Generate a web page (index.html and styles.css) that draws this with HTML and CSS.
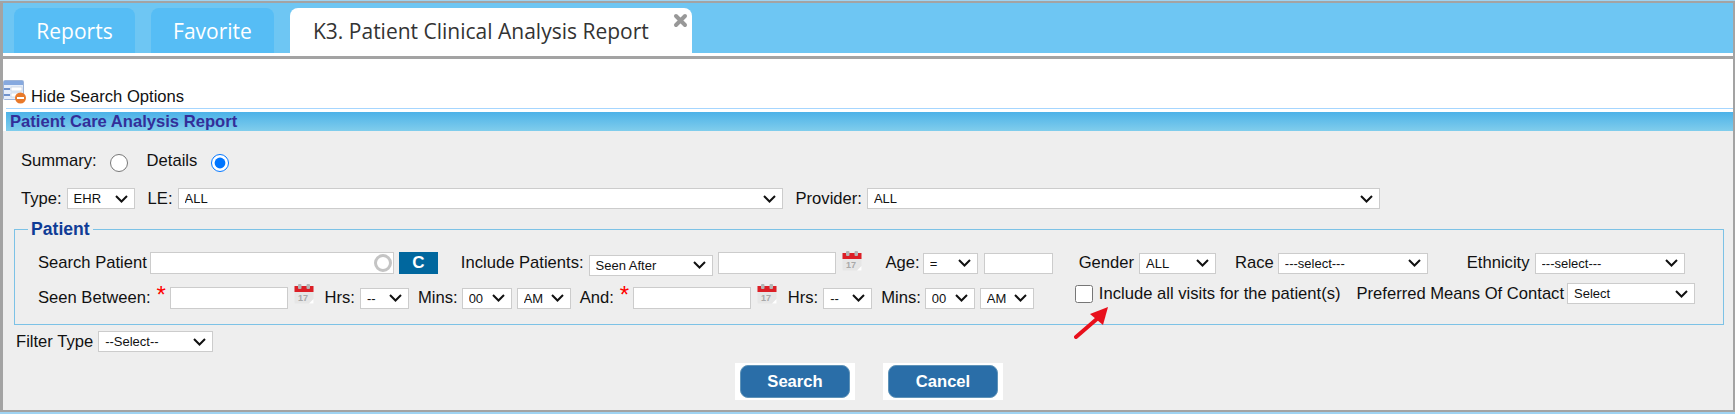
FILE: index.html
```html
<!DOCTYPE html>
<html lang="en">
<head>
<meta charset="utf-8">
<title>Patient Care Analysis Report</title>
<link rel="stylesheet" href="styles.css">
</head>
<body>
<div class="page">
  <nav class="tabbar">
    <a class="tab tab-reports">Reports</a>
    <a class="tab tab-favorite">Favorite</a>
    <a class="tab tab-active">K3. Patient Clinical Analysis Report
      <svg class="tab-close" viewBox="0 0 15 15" aria-hidden="true"><path d="M3 3 L12 12 M12 3 L3 12" fill="none" stroke="#989898" stroke-width="4" stroke-linecap="round"/></svg>
    </a>
  </nav>
  <div class="main">
    <div class="toggle">
      <svg class="toggle-icon" viewBox="0 0 23 24" aria-hidden="true">
        <rect x="0.5" y="0.5" width="20" height="19" rx="1" fill="#e6eefa" stroke="#9db4d8"/>
        <rect x="1" y="1" width="19" height="4" fill="#86a9df"/>
        <rect x="1" y="8" width="6" height="2" fill="#6f92cc"/><rect x="8" y="7" width="11" height="4" fill="#fff" stroke="#b9c6da" stroke-width=".6"/>
        <rect x="1" y="14" width="6" height="2" fill="#6f92cc"/><rect x="8" y="13" width="8" height="4" fill="#fff" stroke="#b9c6da" stroke-width=".6"/>
        <circle cx="17.5" cy="18" r="5.5" fill="#e8792a"/>
        <rect x="14" y="17" width="7" height="2" fill="#fff"/>
      </svg>
      <span>Hide Search Options</span>
    </div>
    <div class="rule"></div>
    <h1 class="title">Patient Care Analysis Report</h1>
    <div class="panel">
      <div class="row row-mode">
        <label>Summary:</label><input class="radio radio-a" type="radio" name="mode">
        <label class="lbl-details">Details</label><input class="radio radio-b" type="radio" name="mode" checked>
      </div>
      <div class="row row-type">
        <label>Type:</label><select class="sel w-type"><option>EHR</option></select>
        <label class="gap-le">LE:</label><select class="sel w-le"><option>ALL</option></select>
        <label class="gap-prov">Provider:</label><select class="sel w-prov"><option>ALL</option></select>
      </div>
      <fieldset class="patient">
        <legend>Patient</legend>
        <div class="row row-a">
          <label>Search Patient</label>
          <span class="search-box"><input class="inp w-search" type="text"><i class="spinner"></i></span>
          <button class="clear" type="button">C</button>
          <label class="gap-incl">Include Patients:</label>
          <select class="sel w-seen"><option>Seen After</option></select>
          <input class="inp w-date" type="text">
          <svg class="cal cal-a" viewBox="0 0 20 20" aria-hidden="true"><rect x="0.5" y="2" width="19" height="17.5" rx="1" fill="#e6e6e6"/><rect x="0.5" y="2" width="19" height="6" fill="#dc1f26"/><rect x="4" y="0" width="3.5" height="5" rx="1" fill="#b5b5b5"/><rect x="12.5" y="0" width="3.5" height="5" rx="1" fill="#b5b5b5"/><text x="9" y="17" font-size="9" font-weight="bold" text-anchor="middle" fill="#a8a8a8" font-family="Liberation Sans">17</text><path d="M15 19.5 L19.5 15 L19.5 19.5 Z" fill="#fff"/></svg>
          <label class="gap-age">Age:</label>
          <select class="sel w-age"><option>=</option></select>
          <input class="inp w-agev" type="text">
          <label class="gap-gender">Gender</label>
          <select class="sel w-gender"><option>ALL</option></select>
          <label class="gap-race">Race</label>
          <select class="sel w-race"><option>---select---</option></select>
          <label class="gap-eth">Ethnicity</label>
          <select class="sel w-race"><option>---select---</option></select>
        </div>
        <div class="row row-b">
          <label>Seen Between:</label><span class="req">*</span>
          <input class="inp w-date" type="text">
          <svg class="cal cal-b" viewBox="0 0 20 20" aria-hidden="true"><rect x="0.5" y="2" width="19" height="17.5" rx="1" fill="#e6e6e6"/><rect x="0.5" y="2" width="19" height="6" fill="#dc1f26"/><rect x="4" y="0" width="3.5" height="5" rx="1" fill="#b5b5b5"/><rect x="12.5" y="0" width="3.5" height="5" rx="1" fill="#b5b5b5"/><text x="9" y="17" font-size="9" font-weight="bold" text-anchor="middle" fill="#a8a8a8" font-family="Liberation Sans">17</text><path d="M15 19.5 L19.5 15 L19.5 19.5 Z" fill="#fff"/></svg>
          <label class="gap-hrs">Hrs:</label><select class="sel w-hrs"><option>--</option></select>
          <label class="gap-mins">Mins:</label><select class="sel w-mins"><option>00</option></select>
          <select class="sel w-ampm"><option>AM</option></select>
          <label class="gap-and">And:</label><span class="req">*</span>
          <input class="inp w-date" type="text">
          <svg class="cal cal-b" viewBox="0 0 20 20" aria-hidden="true"><rect x="0.5" y="2" width="19" height="17.5" rx="1" fill="#e6e6e6"/><rect x="0.5" y="2" width="19" height="6" fill="#dc1f26"/><rect x="4" y="0" width="3.5" height="5" rx="1" fill="#b5b5b5"/><rect x="12.5" y="0" width="3.5" height="5" rx="1" fill="#b5b5b5"/><text x="9" y="17" font-size="9" font-weight="bold" text-anchor="middle" fill="#a8a8a8" font-family="Liberation Sans">17</text><path d="M15 19.5 L19.5 15 L19.5 19.5 Z" fill="#fff"/></svg>
          <label class="gap-hrs">Hrs:</label><select class="sel w-hrs"><option>--</option></select>
          <label class="gap-mins">Mins:</label><select class="sel w-mins"><option>00</option></select>
          <select class="sel w-ampm"><option>AM</option></select>
          <input class="check" type="checkbox">
          <label class="lbl-visits">Include all visits for the patient(s)</label>
          <label class="gap-pref">Preferred Means Of Contact</label>
          <select class="sel w-pref"><option>Select</option></select>
        </div>
      </fieldset>
      <div class="row row-filter">
        <label>Filter Type</label><select class="sel w-filter"><option>--Select--</option></select>
      </div>
      <div class="actions">
        <span class="btn-wrap"><button class="btn" type="button">Search</button></span>
        <span class="btn-wrap"><button class="btn" type="button">Cancel</button></span>
      </div>
      <svg class="arrow" viewBox="0 0 36 34" aria-hidden="true"><path d="M2 32 L24 13" stroke="#e8101c" stroke-width="4" stroke-linecap="round" fill="none"/><path d="M34 2 L16 9 L29 20 Z" fill="#e8101c"/></svg>
    </div>
  </div>
</div>
</body>
</html>
```
FILE: styles.css
```css
* { box-sizing: border-box; }
html, body { margin: 0; padding: 0; }
body {
  width: 1735px; height: 414px; overflow: hidden; background: #9fd3f2;
  font-family: "Liberation Sans", Arial, sans-serif; font-size: 16.6px; color: #111;
  padding-top: 1px;
}
.page { height: 411px; border: solid #a3a3a3; border-width: 2px 2px 2px 3px; background: #fff; }

.tabbar { height: 50px; background: #6ec6f3; display: flex; align-items: flex-end; padding-left: 11px; }
.tab {
  height: 45px; display: flex; align-items: center; justify-content: center;
  border-radius: 8px 8px 0 0; background: #56bdf5; color: #fff;
  font-family: "Open Sans", sans-serif; font-size: 21px;
}
.tab-reports { width: 121px; }
.tab-favorite { width: 123px; margin-left: 16px; }
.tab-active { width: 402px; margin-left: 16px; background: #fff; color: #333; position: relative; justify-content: flex-start; padding-left: 23px; }
.tab-close { position: absolute; right: 4px; top: 5px; width: 15px; height: 15px; }

.main { border-top: 3px solid #fff; }
.toggle { height: 52px; border-top: 3px solid #a3a3a3; display: flex; align-items: flex-end; color: #111; }
.toggle-icon { width: 23px; height: 24px; flex: none; margin-bottom: 4px; }
.toggle span { margin-left: 5px; margin-bottom: 1px; }
.rule { height: 1px; background: #a6d6ff; margin-left: 3px; }
.title {
  margin: 3px 0 0 3px; height: 19px; padding-left: 4px;
  background: linear-gradient(#4cb2e8, #80cdec);
  font-size: 16.6px; line-height: 19px; font-weight: bold; color: #332f99;
}

.panel { height: 279px; background: #eee; position: relative; padding-top: 14px; }
.row { display: flex; align-items: center; }
.row > * { flex: none; }
label { white-space: nowrap; }

.row-mode { padding-left: 18px; height: 32px; }
.radio { width: 18px; height: 18px; margin: 3px 0 0; }
.radio-a { margin-left: 13px; }
.lbl-details { margin-left: 19px; }
.radio-b { margin-left: 14px; }

.row-type { padding-left: 18px; height: 21px; margin-top: 11px; }
.sel {
  appearance: none; -webkit-appearance: none;
  height: 21px; margin: 0 0 0 5px; padding: 0 22px 0 6px; border: 1px solid #ccc; border-radius: 0;
  background: #fff url("data:image/svg+xml,%3Csvg xmlns='http://www.w3.org/2000/svg' width='13' height='8'%3E%3Cpath d='M1 1l5.5 5.5L12 1' fill='none' stroke='%23111' stroke-width='2'/%3E%3C/svg%3E") no-repeat right 6px center;
  font-family: "Liberation Sans", sans-serif; font-size: 13px; color: #111;
}
.inp { height: 22px; margin: 0; padding: 0 3px; border: 1px solid #ccc; background: #fff; border-radius: 0; }
.w-type { width: 68px; }
.gap-le { margin-left: 13px; }
.w-le { width: 605px; }
.gap-prov { margin-left: 13px; }
.w-prov { width: 513px; }

.patient { margin: 12px 9px 0 11px; padding: 0 0 0 23px; height: 104px; border: 1px solid #7cc2e6; min-width: 0; }
.patient legend { margin-left: -10px; padding: 0 3px; font-weight: bold; font-size: 17.6px; color: #0f3c96; line-height: 17px; }
.row-a { margin-top: 13px; height: 24px; }
.search-box { margin-left: 3px; position: relative; display: flex; }
.w-search { width: 244px; }
.spinner { position: absolute; right: 2px; top: 2px; width: 18px; height: 18px; border-radius: 50%; border: 3px solid #c4c4c4; }
.clear { margin-left: 5px; width: 39px; height: 22px; padding: 0; border: 0; background: #00679e; color: #fff; font: bold 17px "Liberation Sans", sans-serif; }
.gap-incl { margin-left: 23px; }
.w-seen { width: 124px; margin-top: 4px; }
.w-date { width: 118px; margin-left: 5px; }
.cal { width: 20px; height: 20px; margin-left: 6px; }
.cal-a { margin-top: -5px; }
.cal-b { margin-top: -9px; }
.gap-age { margin-left: 24px; }
.w-age { width: 55px; margin-left: 3px; }
.w-agev { width: 69px; height: 21px; margin-left: 6px; }
.gap-gender { margin-left: 26px; }
.w-gender { width: 77px; margin-left: 5px; }
.gap-race { margin-left: 19px; }
.w-race { width: 150px; margin-left: 4px; }
.gap-eth { margin-left: 39px; }
.w-race + .gap-eth + .w-race { margin-left: 5px; }

.row-b { margin-top: 11px; height: 24px; }
.req { color: #f00; font-size: 24px; line-height: 14px; margin: 0 0 0 6px; height: 20px; width: 8px; }
.gap-hrs { margin-left: 11px; }
.gap-mins { margin-left: 9px; }
.w-hrs { width: 49px; padding-right: 18px; }
.w-mins { width: 50px; margin-left: 4px; padding-right: 18px; }
.w-ampm { width: 54px; padding-right: 18px; }
.gap-and { margin-left: 9px; }
.check { width: 18px; height: 18px; margin: -9px 0 0 41px; }
.lbl-visits { margin: -9px 0 0 6px; }
.gap-pref { margin: -9px 0 0 16px; }
.w-pref { width: 128px; margin: -9px 0 0 3px; }

.row-filter { padding-left: 13px; margin-top: 6px; }
.w-filter { width: 115px; }

.actions { display: flex; justify-content: flex-start; gap: 28px; margin: 11px 0 0 732px; }
.btn-wrap { width: 120px; height: 37px; background: #fff; display: flex; align-items: center; justify-content: center; }
.btn {
  width: 110px; height: 33px; padding: 0; border: 1px solid #5f93b8; border-radius: 8px; background: #2a6ea8; color: #fff;
  font: bold 16.6px "Liberation Sans", sans-serif;
}
.arrow { position: absolute; left: 1071px; top: 174px; width: 36px; height: 34px; }
```
